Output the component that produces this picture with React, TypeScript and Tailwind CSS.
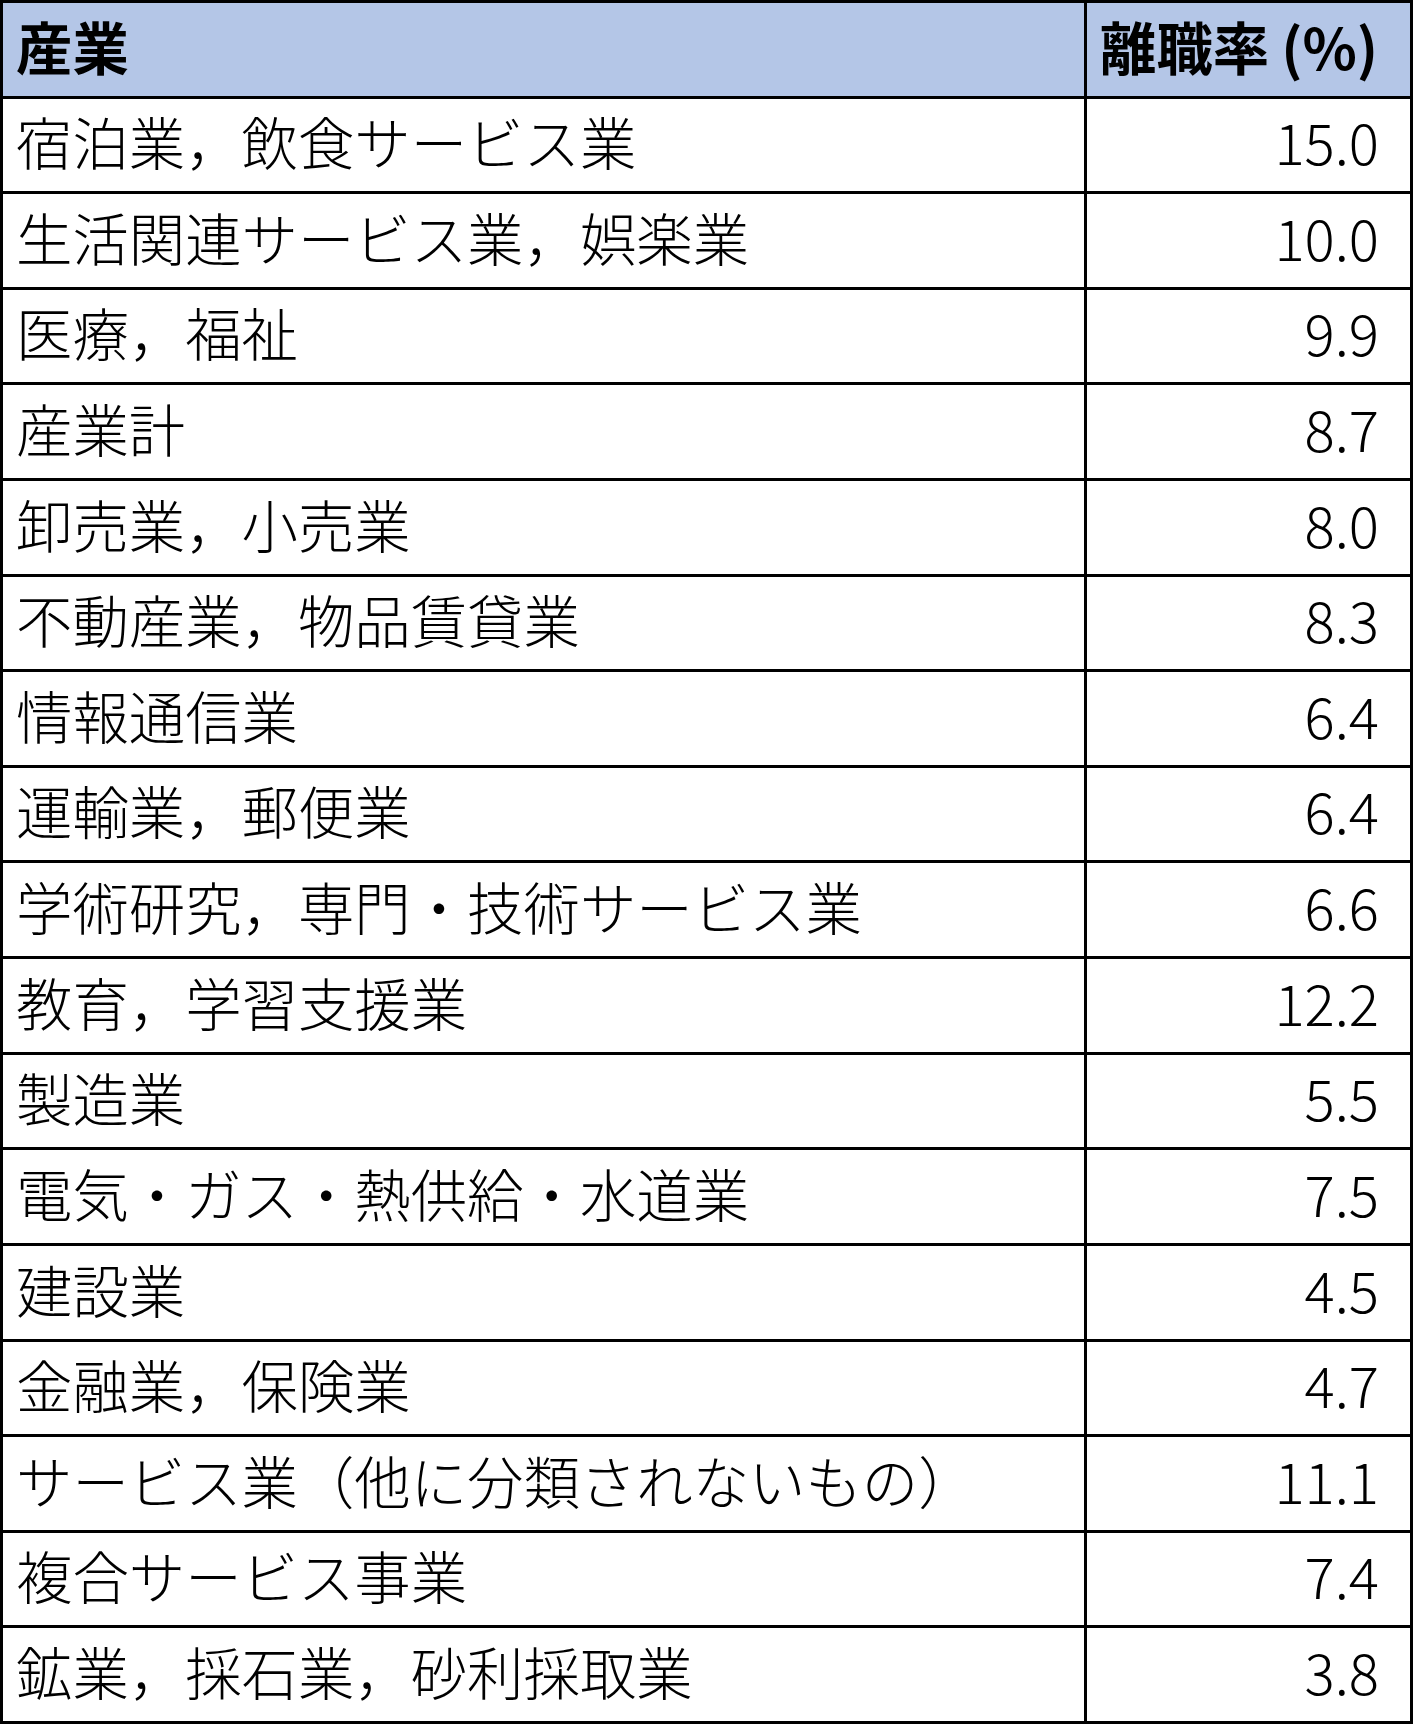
import React from "react";

const rows: [string, string][] = [
  ["宿泊業，飲食サービス業", "15.0"],
  ["生活関連サービス業，娯楽業", "10.0"],
  ["医療，福祉", "9.9"],
  ["産業計", "8.7"],
  ["卸売業，小売業", "8.0"],
  ["不動産業，物品賃貸業", "8.3"],
  ["情報通信業", "6.4"],
  ["運輸業，郵便業", "6.4"],
  ["学術研究，専門・技術サービス業", "6.6"],
  ["教育，学習支援業", "12.2"],
  ["製造業", "5.5"],
  ["電気・ガス・熱供給・水道業", "7.5"],
  ["建設業", "4.5"],
  ["金融業，保険業", "4.7"],
  ["サービス業（他に分類されないもの）", "11.1"],
  ["複合サービス事業", "7.4"],
  ["鉱業，採石業，砂利採取業", "3.8"],
];

export default function App() {
  return (
    <div className="w-[1413px] bg-white border-t-[3px] border-l-[3px] border-r-[3px] border-black font-['Noto_Sans_CJK_JP','Noto_Sans_CJK_SC',sans-serif] text-[56.4px] leading-none text-black font-light">
      <div className="flex h-[95.61px] border-b-[3px] border-black bg-[#b4c6e7] font-bold">
        <div className="w-[1084px] shrink-0 border-r-[3px] border-black flex items-center pl-[13px] pb-[7px]">
          産業
        </div>
        <div className="flex-1 flex items-center pl-[13px] pb-[7px] whitespace-nowrap">
          <span>離職率</span>
          <span className="ml-[12px]">(%)</span>
        </div>
      </div>
      {rows.map(([name, value]) => (
        <div key={name} className="flex h-[95.61px] border-b-[3px] border-black">
          <div className="w-[1084px] shrink-0 border-r-[3px] border-black flex items-center pl-[13px] pb-[7px] whitespace-nowrap">
            {name}
          </div>
          <div className="flex-1 flex items-center justify-end pr-[31px] pb-[7px]">
            {value}
          </div>
        </div>
      ))}
    </div>
  );
}
